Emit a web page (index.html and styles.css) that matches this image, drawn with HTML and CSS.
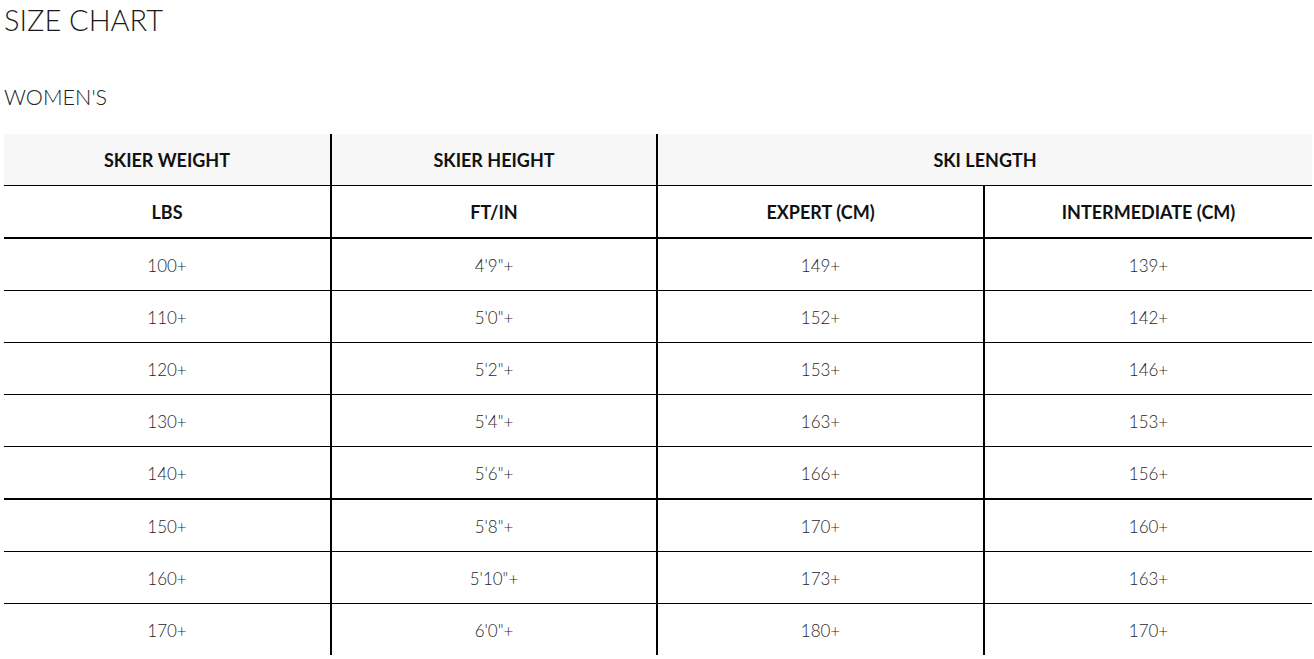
FILE: index.html
```html
<!DOCTYPE html>
<html>
<head>
<meta charset="utf-8">
<link rel="stylesheet" href="styles.css">
</head>
<body>
<div class="page">
  <h1 class="title">SIZE CHART</h1>
  <h2 class="subtitle">WOMEN'S</h2>
  <table class="chart">
    <colgroup>
      <col class="c1"><col class="c2"><col class="c3"><col class="c4">
    </colgroup>
    <thead>
      <tr class="group">
        <th>SKIER WEIGHT</th>
        <th class="vl">SKIER HEIGHT</th>
        <th class="vl" colspan="2">SKI LENGTH</th>
      </tr>
      <tr class="units">
        <th>LBS</th>
        <th class="vl">FT/IN</th>
        <th class="vl">EXPERT (CM)</th>
        <th class="vl">INTERMEDIATE (CM)</th>
      </tr>
    </thead>
    <tbody>
      <tr><td>100+</td><td class="vl">4'9"+</td><td class="vl">149+</td><td class="vl">139+</td></tr>
      <tr><td>110+</td><td class="vl">5'0"+</td><td class="vl">152+</td><td class="vl">142+</td></tr>
      <tr><td>120+</td><td class="vl">5'2"+</td><td class="vl">153+</td><td class="vl">146+</td></tr>
      <tr><td>130+</td><td class="vl">5'4"+</td><td class="vl">163+</td><td class="vl">153+</td></tr>
      <tr class="thick"><td>140+</td><td class="vl">5'6"+</td><td class="vl">166+</td><td class="vl">156+</td></tr>
      <tr><td>150+</td><td class="vl">5'8"+</td><td class="vl">170+</td><td class="vl">160+</td></tr>
      <tr><td>160+</td><td class="vl">5'10"+</td><td class="vl">173+</td><td class="vl">163+</td></tr>
      <tr class="last"><td>170+</td><td class="vl">6'0"+</td><td class="vl">180+</td><td class="vl">170+</td></tr>
    </tbody>
  </table>
</div>
</body>
</html>
```

FILE: styles.css
```css
html, body {
  margin: 0;
  padding: 0;
  background: #fff;
}

.page {
  display: flex;
  flex-direction: column;
  align-items: flex-start;
  padding: 0 0 0 4px;
  font-family: Lato, "Liberation Sans", sans-serif;
  color: #222;
}

.title {
  margin: 2px 0 0 0;
  font-size: 29px;
  line-height: 36px;
  font-weight: 300;
  color: #1a1a1a;
}

.subtitle {
  margin: 46px 0 0 0;
  font-size: 21.6px;
  line-height: 26px;
  font-weight: 300;
  color: #222;
}

.chart {
  margin-top: 24px;
  border-collapse: separate;
  border-spacing: 0;
  table-layout: fixed;
  width: 1308px;
}

.c1 { width: 326px; }
.c2 { width: 326px; }
.c3 { width: 327px; }
.c4 { width: 329px; }

.chart th,
.chart td {
  padding: 0;
  text-align: center;
  vertical-align: middle;
  border-bottom: 1px solid #000;
}

.chart .vl {
  border-left: 2px solid #000;
}

.chart th {
  font-size: 18px;
  font-weight: 700;
  color: #111;
  height: 51px;
}

.group th {
  background: #f7f7f7;
}

.units th {
  border-bottom-width: 2px;
}

.chart td {
  padding-top: 2px;
  font-size: 17px;
  font-weight: 300;
  color: #1f1f1f;
  height: 49px;
}

.thick td {
  border-bottom-width: 2px;
}

.last td {
  border-bottom: none;
}
```
